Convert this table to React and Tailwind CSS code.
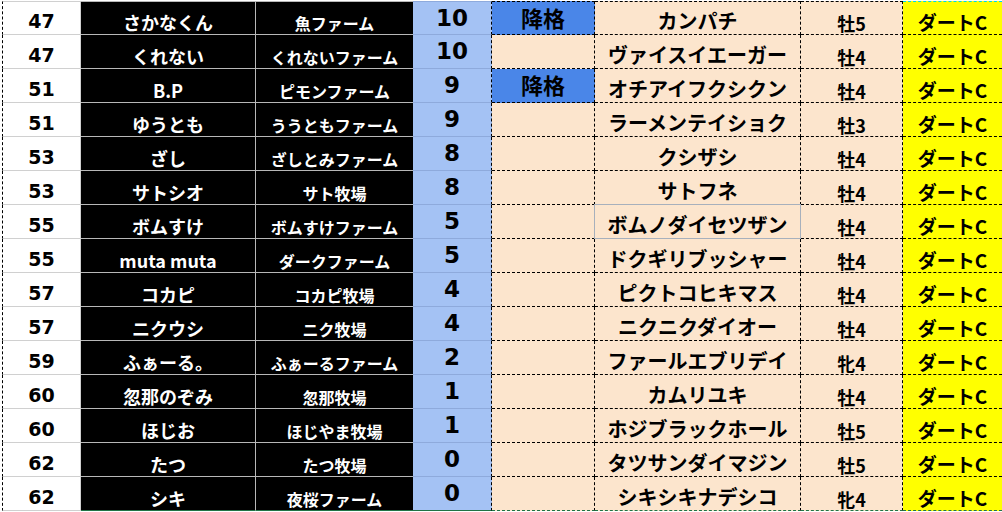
const rows = [
  ['47', 'さかなくん', '魚ファーム', '10', true, 'カンパチ', '牡5'],
  ['47', 'くれない', 'くれないファーム', '10', false, 'ヴァイスイエーガー', '牡4'],
  ['51', 'B.P', 'ピモンファーム', '9', true, 'オチアイフクシクン', '牡4'],
  ['51', 'ゆうとも', 'ううともファーム', '9', false, 'ラーメンテイショク', '牡3'],
  ['53', 'ざし', 'ざしとみファーム', '8', false, 'クシザシ', '牡4'],
  ['53', 'サトシオ', 'サト牧場', '8', false, 'サトフネ', '牡4'],
  ['55', 'ボムすけ', 'ボムすけファーム', '5', false, 'ボムノダイセツザン', '牡4'],
  ['55', 'muta muta', 'ダークファーム', '5', false, 'ドクギリブッシャー', '牡4'],
  ['57', 'コカピ', 'コカピ牧場', '4', false, 'ピクトコヒキマス', '牡4'],
  ['57', 'ニクウシ', 'ニク牧場', '4', false, 'ニクニクダイオー', '牡4'],
  ['59', 'ふぁーる。', 'ふぁーるファーム', '2', false, 'ファールエブリデイ', '牝4'],
  ['60', '忽那のぞみ', '忽那牧場', '1', false, 'カムリユキ', '牡4'],
  ['60', 'ほじお', 'ほじやま牧場', '1', false, 'ホジブラックホール', '牡5'],
  ['62', 'たつ', 'たつ牧場', '0', false, 'タツサンダイマジン', '牡5'],
  ['62', 'シキ', '夜桜ファーム', '0', false, 'シキシキナデシコ', '牝4'],
];

const dashed = 'border-r border-b border-dashed border-black';
const digits = "font-['DejaVu_Sans','Noto_Sans_CJK_JP',sans-serif]";

function Row({ r, first, last }) {
  const [rank, name, farm, pts, demoted, horse, sex] = r;
  const top = first ? 'border-t' : '';
  const greenB = last ? 'border-b-[#217346]' : '';
  const selected = horse === 'ボムノダイセツザン';
  return (
    <div className="flex h-[34px]">
      <div
        className={`w-[79px] ml-[2px] flex items-end justify-center pb-[3px] bg-white text-black text-[19px] ${digits} border-b border-r border-l border-[#d0d0d0] border-l-black [border-left-style:dashed] ${top}`}
      >
        {rank}
      </div>
      <div
        className={`w-[175px] flex items-end justify-center pb-[3px] bg-black text-white text-[18px] border-b border-r border-[#b8b8b8] ${top} ${greenB}`}
      >
        {name}
      </div>
      <div
        className={`w-[157px] flex items-end justify-center pb-[3px] bg-black text-white text-[16px] border-b border-[#b8b8b8] ${top} ${greenB}`}
      >
        {farm}
      </div>
      <div
        className={`w-[79px] flex items-center justify-center bg-[#a4c2f4] text-black text-[23px] ${digits} border-b border-r border-b-[#8eaadc] border-r-black [border-right-style:dashed] ${top} ${first ? 'border-t-[#8eaadc]' : ''} ${greenB}`}
      >
        {pts}
      </div>
      <div
        className={`w-[103px] flex items-start justify-center pt-[4px] text-black text-[22px] ${demoted ? 'bg-[#4a86e8]' : 'bg-[#fce5cd]'} ${dashed} ${top} ${greenB}`}
      >
        {demoted ? '降格' : ''}
      </div>
      <div
        className={`w-[206px] flex items-end justify-center pb-[3px] bg-[#fce5cd] text-black text-[20px] ${
          selected ? 'border border-[#a7b0bc] ml-[-1px] w-[207px] mt-[-1px] h-[35px]' : dashed
        } ${top} ${greenB}`}
      >
        {horse}
      </div>
      <div
        className={`w-[102px] flex items-end justify-center pb-[2px] bg-[#fce5cd] text-black text-[18px] ${dashed} ${top} ${greenB}`}
      >
        {sex}
      </div>
      <div
        className={`w-[99px] flex items-end justify-center pb-[3px] bg-[#ffff00] text-black text-[19px] border-b border-dashed border-black ${top} ${first ? 'border-t-[#00d8e8]' : ''} ${greenB}`}
      >
        ダートC
      </div>
    </div>
  );
}

export default function App() {
  return (
    <div className="w-[1002px] h-[512px] overflow-hidden bg-white pt-px font-['Noto_Sans_CJK_JP','Noto_Sans',sans-serif] font-bold leading-none">
      {rows.map((r, i) => (
        <Row key={i} r={r} first={i === 0} last={i === rows.length - 1} />
      ))}
    </div>
  );
}
